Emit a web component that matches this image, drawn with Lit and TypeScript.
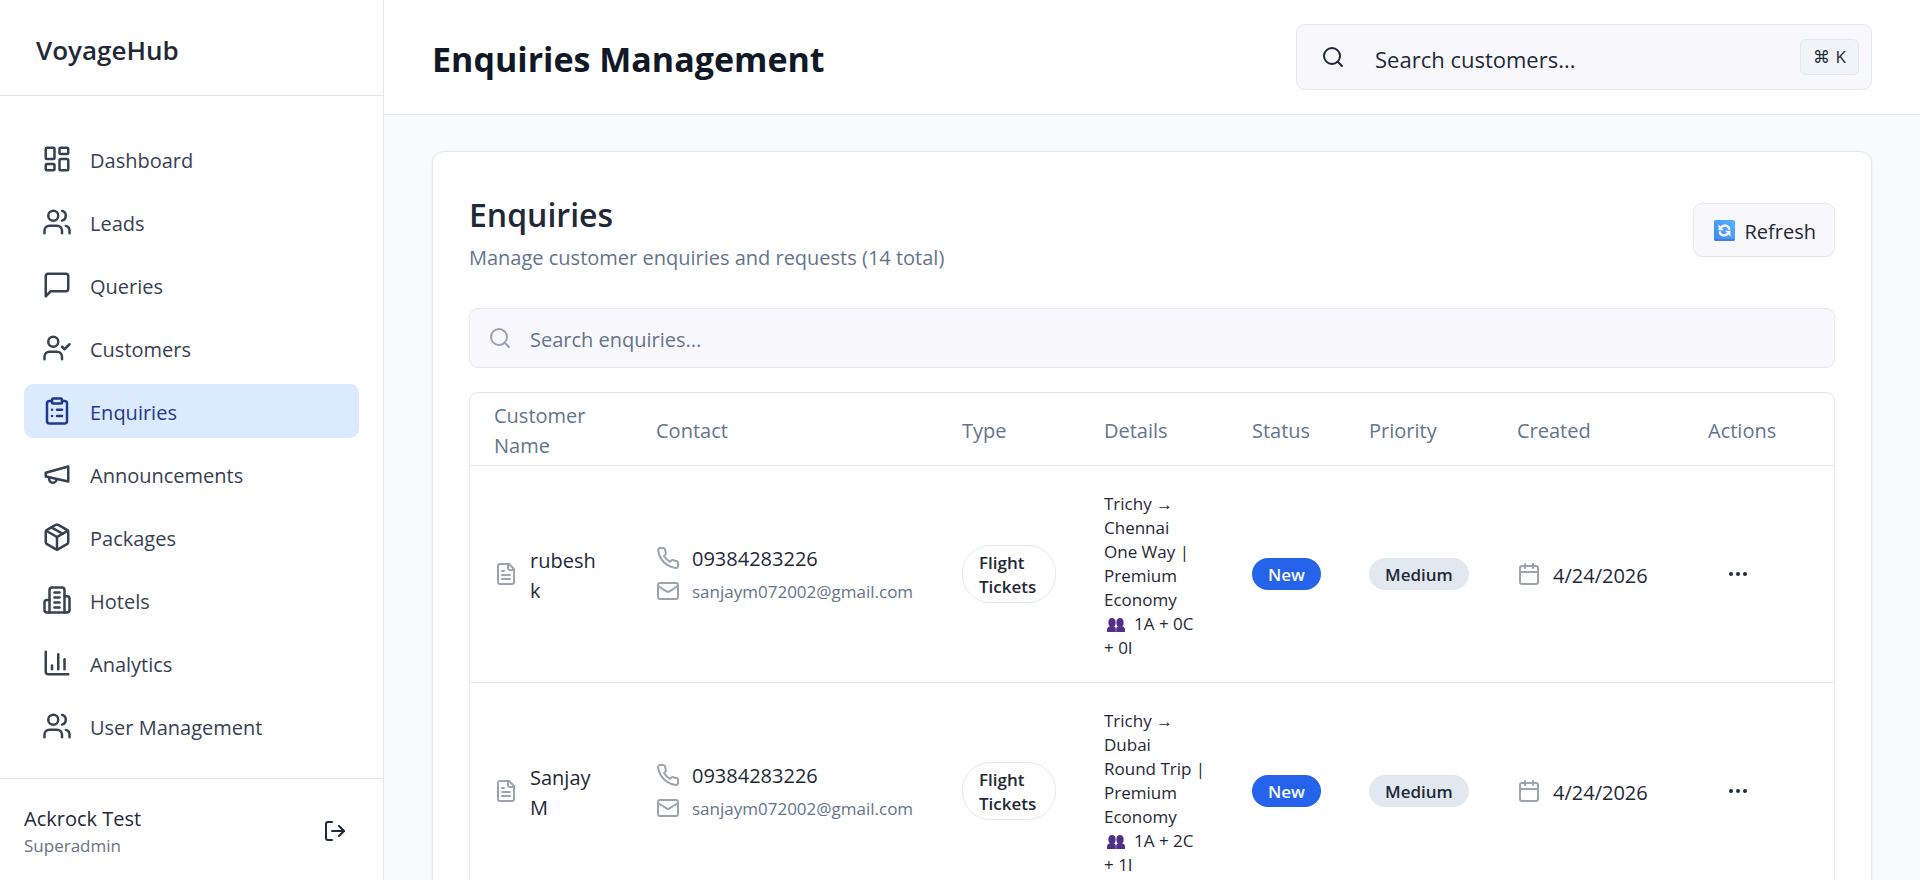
import { LitElement, html, svg, css, nothing } from "lit";
import { customElement, property } from "lit/decorators.js";
import { classMap } from "lit/directives/class-map.js";

const ICONS: Record<string, unknown> = {
  dashboard: svg`<rect width="7" height="9" x="3" y="3" rx="1"/><rect width="7" height="5" x="14" y="3" rx="1"/><rect width="7" height="9" x="14" y="12" rx="1"/><rect width="7" height="5" x="3" y="16" rx="1"/>`,
  users: svg`<path d="M16 21v-2a4 4 0 0 0-4-4H6a4 4 0 0 0-4 4v2"/><circle cx="9" cy="7" r="4"/><path d="M22 21v-2a4 4 0 0 0-3-3.87"/><path d="M16 3.13a4 4 0 0 1 0 7.75"/>`,
  message: svg`<path d="M21 15a2 2 0 0 1-2 2H7l-4 4V5a2 2 0 0 1 2-2h14a2 2 0 0 1 2 2z"/>`,
  userCheck: svg`<path d="m16 11 2 2 4-4"/><path d="M16 21v-2a4 4 0 0 0-4-4H6a4 4 0 0 0-4 4v2"/><circle cx="9" cy="7" r="4"/>`,
  clipboard: svg`<rect width="8" height="4" x="8" y="2" rx="1" ry="1"/><path d="M16 4h2a2 2 0 0 1 2 2v14a2 2 0 0 1-2 2H6a2 2 0 0 1-2-2V6a2 2 0 0 1 2-2h2"/><path d="M12 11h4"/><path d="M12 16h4"/><path d="M8 11h.01"/><path d="M8 16h.01"/>`,
  megaphone: svg`<path d="m3 11 18-5v12L3 14v-3z"/><path d="M11.6 16.8a3 3 0 1 1-5.8-1.6"/>`,
  pkg: svg`<path d="M11 21.73a2 2 0 0 0 2 0l7-4A2 2 0 0 0 21 16V8a2 2 0 0 0-1-1.73l-7-4a2 2 0 0 0-2 0l-7 4A2 2 0 0 0 3 8v8a2 2 0 0 0 1 1.73z"/><path d="M12 22V12"/><path d="m3.3 7 8.7 5 8.7-5"/><path d="m7.5 4.27 9 5.15"/>`,
  building: svg`<path d="M6 22V4a2 2 0 0 1 2-2h8a2 2 0 0 1 2 2v18Z"/><path d="M6 12H4a2 2 0 0 0-2 2v6a2 2 0 0 0 2 2h2"/><path d="M18 9h2a2 2 0 0 1 2 2v9a2 2 0 0 1-2 2h-2"/><path d="M10 6h4"/><path d="M10 10h4"/><path d="M10 14h4"/><path d="M10 18h4"/>`,
  chart: svg`<path d="M3 3v16a2 2 0 0 0 2 2h16"/><path d="M18 17V9"/><path d="M13 17V5"/><path d="M8 17v-3"/>`,
  logout: svg`<path d="m16 17 5-5-5-5"/><path d="M21 12H9"/><path d="M9 21H5a2 2 0 0 1-2-2V5a2 2 0 0 1 2-2h4"/>`,
  search: svg`<circle cx="11" cy="11" r="8"/><path d="m21 21-4.3-4.3"/>`,
  file: svg`<path d="M15 2H6a2 2 0 0 0-2 2v16a2 2 0 0 0 2 2h12a2 2 0 0 0 2-2V7Z"/><path d="M14 2v4a2 2 0 0 0 2 2h4"/><path d="M10 9H8"/><path d="M16 13H8"/><path d="M16 17H8"/>`,
  phone: svg`<path d="M22 16.92v3a2 2 0 0 1-2.18 2 19.79 19.79 0 0 1-8.63-3.07 19.5 19.5 0 0 1-6-6 19.79 19.79 0 0 1-3.07-8.67A2 2 0 0 1 4.11 2h3a2 2 0 0 1 2 1.72 12.84 12.84 0 0 0 .7 2.81 2 2 0 0 1-.45 2.11L8.09 9.91a16 16 0 0 0 6 6l1.27-1.27a2 2 0 0 1 2.11-.45 12.84 12.84 0 0 0 2.81.7A2 2 0 0 1 22 16.92z"/>`,
  mail: svg`<rect width="20" height="16" x="2" y="4" rx="2"/><path d="m22 7-8.97 5.7a1.94 1.94 0 0 1-2.06 0L2 7"/>`,
  calendar: svg`<path d="M8 2v4"/><path d="M16 2v4"/><rect width="18" height="18" x="3" y="4" rx="2"/><path d="M3 10h18"/>`,
  more: svg`<circle cx="12" cy="12" r="1"/><circle cx="19" cy="12" r="1"/><circle cx="5" cy="12" r="1"/>`,
};

const icon = (name: string, size = 24) => html`<svg
  width=${size} height=${size} viewBox="0 0 24 24" fill="none" stroke="currentColor"
  stroke-width="2" stroke-linecap="round" stroke-linejoin="round" aria-hidden="true"
>${ICONS[name]}</svg>`;

interface Enquiry {
  name: string;
  phone: string;
  email: string;
  type: string;
  from: string;
  to: string;
  trip: string;
  cabin: string;
  party: string;
  status: string;
  priority: string;
  created: string;
}

const ENQUIRIES: Enquiry[] = [
  {
    name: "rubesh k", phone: "09384283226", email: "sanjaym072002@gmail.com", type: "Flight Tickets",
    from: "Trichy", to: "Chennai", trip: "One Way", cabin: "Premium Economy", party: "1A + 0C + 0I",
    status: "New", priority: "Medium", created: "4/24/2026",
  },
  {
    name: "Sanjay M", phone: "09384283226", email: "sanjaym072002@gmail.com", type: "Flight Tickets",
    from: "Trichy", to: "Dubai", trip: "Round Trip", cabin: "Premium Economy", party: "1A + 2C + 1I",
    status: "New", priority: "Medium", created: "4/24/2026",
  },
];

const NAV = [
  ["dashboard", "Dashboard"],
  ["users", "Leads"],
  ["message", "Queries"],
  ["userCheck", "Customers"],
  ["clipboard", "Enquiries"],
  ["megaphone", "Announcements"],
  ["pkg", "Packages"],
  ["building", "Hotels"],
  ["chart", "Analytics"],
  ["users", "User Management"],
];

const shared = css`
  * { box-sizing: border-box; }
  svg { display: block; flex: none; }
  button { font: inherit; color: inherit; cursor: pointer; }
  input { font: inherit; color: inherit; }
`;

@customElement("side-bar")
export class SideBar extends LitElement {
  @property() active = "Enquiries";

  static styles = [shared, css`
    :host {
      display: flex;
      flex-direction: column;
      min-height: 0;
      background: #fff;
      border-right: 1px solid #e2e8f0;
    }
    .brand {
      padding: 32px 36px 27px;
      border-bottom: 1px solid #e2e8f0;
      font-size: 26px;
      line-height: 36px;
      font-weight: 600;
    }
    nav {
      flex: 1;
      min-height: 0;
      overflow: hidden;
      display: flex;
      flex-direction: column;
      gap: 9px;
      padding: 36px 24px;
    }
    .item {
      flex: none;
      display: flex;
      align-items: center;
      gap: 18px;
      height: 54px;
      padding: 0 18px;
      border-radius: 9px;
      color: #374151;
      font-size: 20px;
      line-height: 30px;
      text-decoration: none;
    }
    .item span { padding-top: 4px; }
    .item.on { background: #dbeafe; color: #1e3a8a; }
    .user {
      flex: none;
      display: flex;
      align-items: center;
      justify-content: space-between;
      padding: 25px 24px 22px;
      border-top: 1px solid #e2e8f0;
    }
    .name { font-size: 20px; line-height: 30px; }
    .role { font-size: 17px; line-height: 24px; color: #6b7280; }
    .logout { display: flex; padding: 12px; border: 0; background: none; }
  `];

  render() {
    return html`
      <div class="brand">VoyageHub</div>
      <nav aria-label="Main">
        ${NAV.map(([glyph, label]) => html`
          <a href="#" class=${classMap({ item: true, on: label === this.active })}
            aria-current=${label === this.active ? "page" : nothing}>
            ${icon(glyph, 30)}<span>${label}</span>
          </a>`)}
      </nav>
      <div class="user">
        <div>
          <div class="name">Ackrock Test</div>
          <div class="role">Superadmin</div>
        </div>
        <button class="logout" aria-label="Log out">${icon("logout")}</button>
      </div>`;
  }
}

@customElement("enquiry-table")
export class EnquiryTable extends LitElement {
  @property({ attribute: false }) rows: Enquiry[] = [];

  static styles = [shared, css`
    :host {
      display: block;
      border: 1px solid #e2e8f0;
      border-radius: 9px;
      overflow: hidden;
    }
    table { width: 100%; table-layout: fixed; border-collapse: collapse; font-size: 20px; line-height: 30px; }
    tr { border-bottom: 1px solid #e2e8f0; }
    th { padding: 8px 24px 4px; text-align: left; font-weight: 400; color: #64748b; }
    td { padding: 24px; vertical-align: middle; }
    .c-name { width: 162px; }
    .c-contact { width: 306px; }
    .c-type { width: 142px; }
    .c-details { width: 148px; }
    .c-status { width: 117px; }
    .c-priority { width: 148px; }
    .c-created { width: 191px; }
    .c-actions { width: 150px; }
    .line { display: flex; align-items: center; gap: 12px; white-space: nowrap; }
    .line svg { color: #9ca3af; }
    .line span { padding-top: 3px; }
    .wrap { white-space: normal; }
    .mail, .details, .pill { font-size: 17px; }
    .mail { color: #64748b; }
    .details, .pill { line-height: 24px; }
    .details { padding: 26px 22px 22px 24px; }
    .people { display: inline-block; margin: 0 9px 0 3px; vertical-align: -2px; }
    .pill {
      display: inline-flex;
      padding: 5px 16px 3px;
      border-radius: 28px;
      font-weight: 600;
      vertical-align: middle;
    }
    .outline { border: 1px solid #e2e8f0; }
    .new { background: #2563eb; color: #f8fafc; }
    .medium { background: #e2e8f0; }
    .more { display: flex; padding: 12px 18px; border: 0; background: none; }
  `];

  render() {
    return html`
      <table>
        <colgroup>
          <col class="c-name"><col class="c-contact"><col class="c-type"><col class="c-details">
          <col class="c-status"><col class="c-priority"><col class="c-created"><col class="c-actions">
        </colgroup>
        <thead>
          <tr>
            ${["Customer Name", "Contact", "Type", "Details", "Status", "Priority", "Created", "Actions"]
              .map((h) => html`<th scope="col">${h}</th>`)}
          </tr>
        </thead>
        <tbody>
          ${this.rows.map((r) => html`
            <tr>
              <td><div class="line wrap">${icon("file")}<span>${r.name}</span></div></td>
              <td>
                <div class="line">${icon("phone")}<span>${r.phone}</span></div>
                <div class="line mail">${icon("mail")}<span>${r.email}</span></div>
              </td>
              <td><span class="pill outline">${r.type}</span></td>
              <td class="details">
                <div>${r.from} → ${r.to}</div>
                <div>${r.trip} | ${r.cabin}</div>
                <div>${this.people()}${r.party}</div>
              </td>
              <td><span class="pill new">${r.status}</span></td>
              <td><span class="pill medium">${r.priority}</span></td>
              <td><div class="line">${icon("calendar")}<span>${r.created}</span></div></td>
              <td><button class="more" aria-label="Actions for ${r.name}">${icon("more")}</button></td>
            </tr>`)}
        </tbody>
      </table>`;
  }

  private people() {
    return html`<svg class="people" width="18" height="14" viewBox="0 0 18 14" aria-hidden="true">
      <g fill="#533087">
        <ellipse cx="5" cy="4.500" rx="3.600" ry="4.500"/><path d="M0 14v-2.500q0-2.500 3-3.300h4q1.800.6 1.800 2.800v3z"/>
        <ellipse cx="13" cy="4.500" rx="3.600" ry="4.500"/><path d="M9.200 14v-3q0-2.200 1.800-2.800h4q3 .8 3 3.300v2.500z"/>
      </g>
    </svg>`;
  }
}

@customElement("app-root")
export class AppRoot extends LitElement {
  static styles = [shared, css`
    :host {
      display: grid;
      grid-template-columns: 384px minmax(0, 1fr);
      grid-template-rows: minmax(0, 1fr);
      height: 100vh;
      overflow: hidden;
      background: #f8fafc;
      color: #1f2937;
      font-family: "Open Sans", "Noto Sans", sans-serif;
      font-size: 20px;
      line-height: 30px;
    }
    .page { display: flex; flex-direction: column; min-height: 0; }
    header {
      flex: none;
      display: flex;
      align-items: center;
      justify-content: space-between;
      gap: 48px;
      padding: 24px 48px;
      background: #fff;
      border-bottom: 1px solid #e2e8f0;
    }
    h1, h2, p { margin: 0; }
    h1 { padding-top: 4px; font-size: 34px; line-height: 48px; font-weight: 700; color: #111827; }
    .find {
      display: flex;
      align-items: center;
      width: 576px;
      height: 66px;
      padding: 0 12px 0 24px;
      gap: 30px;
      background: #f8f8fc;
      border: 1px solid #e2e8f0;
      border-radius: 9px;
      font-size: 22px;
    }
    input {
      flex: 1;
      min-width: 0;
      padding: 4px 0 0;
      border: 0;
      outline: 0;
      background: none;
    }
    .find input::placeholder { color: #1f2937; opacity: 1; }
    kbd {
      display: flex;
      gap: 6px;
      padding: 5px 12px;
      border: 1px solid #e2e8f0;
      border-radius: 6px;
      background: #f1f5f9;
      font-family: inherit;
      font-size: 17px;
      line-height: 24px;
    }
    main { flex: 1; min-height: 0; overflow-y: auto; scrollbar-width: none; padding: 36px 48px; }
    .card {
      padding: 36px;
      background: #fff;
      border: 1px solid #e2e8f0;
      border-radius: 12px;
      box-shadow: 0 1px 3px rgb(0 0 0 / 6%);
    }
    .top { display: flex; align-items: center; justify-content: space-between; margin-bottom: 36px; }
    h2 { font-size: 32px; line-height: 54px; font-weight: 600; }
    .sub { padding-top: 2px; line-height: 28px; color: #64748b; }
    .refresh {
      display: flex;
      align-items: center;
      gap: 9px;
      height: 54px;
      padding: 0 18px 0 20px;
      background: #f8f8fc;
      border: 1px solid #e2e8f0;
      border-radius: 9px;
    }
    .refresh span { padding-top: 4px; }
    .filter {
      display: flex;
      align-items: center;
      gap: 18px;
      height: 60px;
      margin-bottom: 24px;
      padding: 0 18px;
      background: #f8f8fc;
      border: 1px solid #e2e8f0;
      border-radius: 9px;
    }
    .filter svg { color: #9ca3af; }
    .filter input::placeholder { color: #64748b; opacity: 1; }
  `];

  render() {
    return html`
      <side-bar></side-bar>
      <div class="page">
        <header>
          <h1>Enquiries Management</h1>
          <label class="find">
            ${icon("search")}
            <input type="text" placeholder="Search customers..." aria-label="Search customers">
            <kbd><span>⌘</span><span>K</span></kbd>
          </label>
        </header>
        <main>
          <section class="card">
            <div class="top">
              <div>
                <h2>Enquiries</h2>
                <p class="sub">Manage customer enquiries and requests (14 total)</p>
              </div>
              <button class="refresh">${this.refreshGlyph()}<span>Refresh</span></button>
            </div>
            <label class="filter">
              ${icon("search")}
              <input type="text" placeholder="Search enquiries..." aria-label="Search enquiries">
            </label>
            <enquiry-table .rows=${ENQUIRIES}></enquiry-table>
          </section>
        </main>
      </div>`;
  }

  private refreshGlyph() {
    return html`<svg width="21" height="21" viewBox="0 0 21 21" aria-hidden="true">
      <defs><linearGradient id="sky" x1="1" y1="0" x2="0" y2="1">
        <stop offset="0" stop-color="#55b4ff"/><stop offset="1" stop-color="#4286ee"/>
      </linearGradient></defs>
      <rect width="21" height="21" rx="2" fill="url(#sky)"/>
      <path d="M0 19h21a2 2 0 0 1-2 2H2a2 2 0 0 1-2-2z" fill="#3f7fe0"/>
      <g fill="none" stroke="#f4f0ff" stroke-width="2.400">
        <path d="M7 7.200q5-3.500 8 .6v2"/><path d="M14 13.800q-5 3.500-8-.6v-2"/>
      </g>
      <path d="M4.500 4.200v6h5.500zM16.500 16.800v-6h-5.500z" fill="#f4f0ff"/>
    </svg>`;
  }
}
